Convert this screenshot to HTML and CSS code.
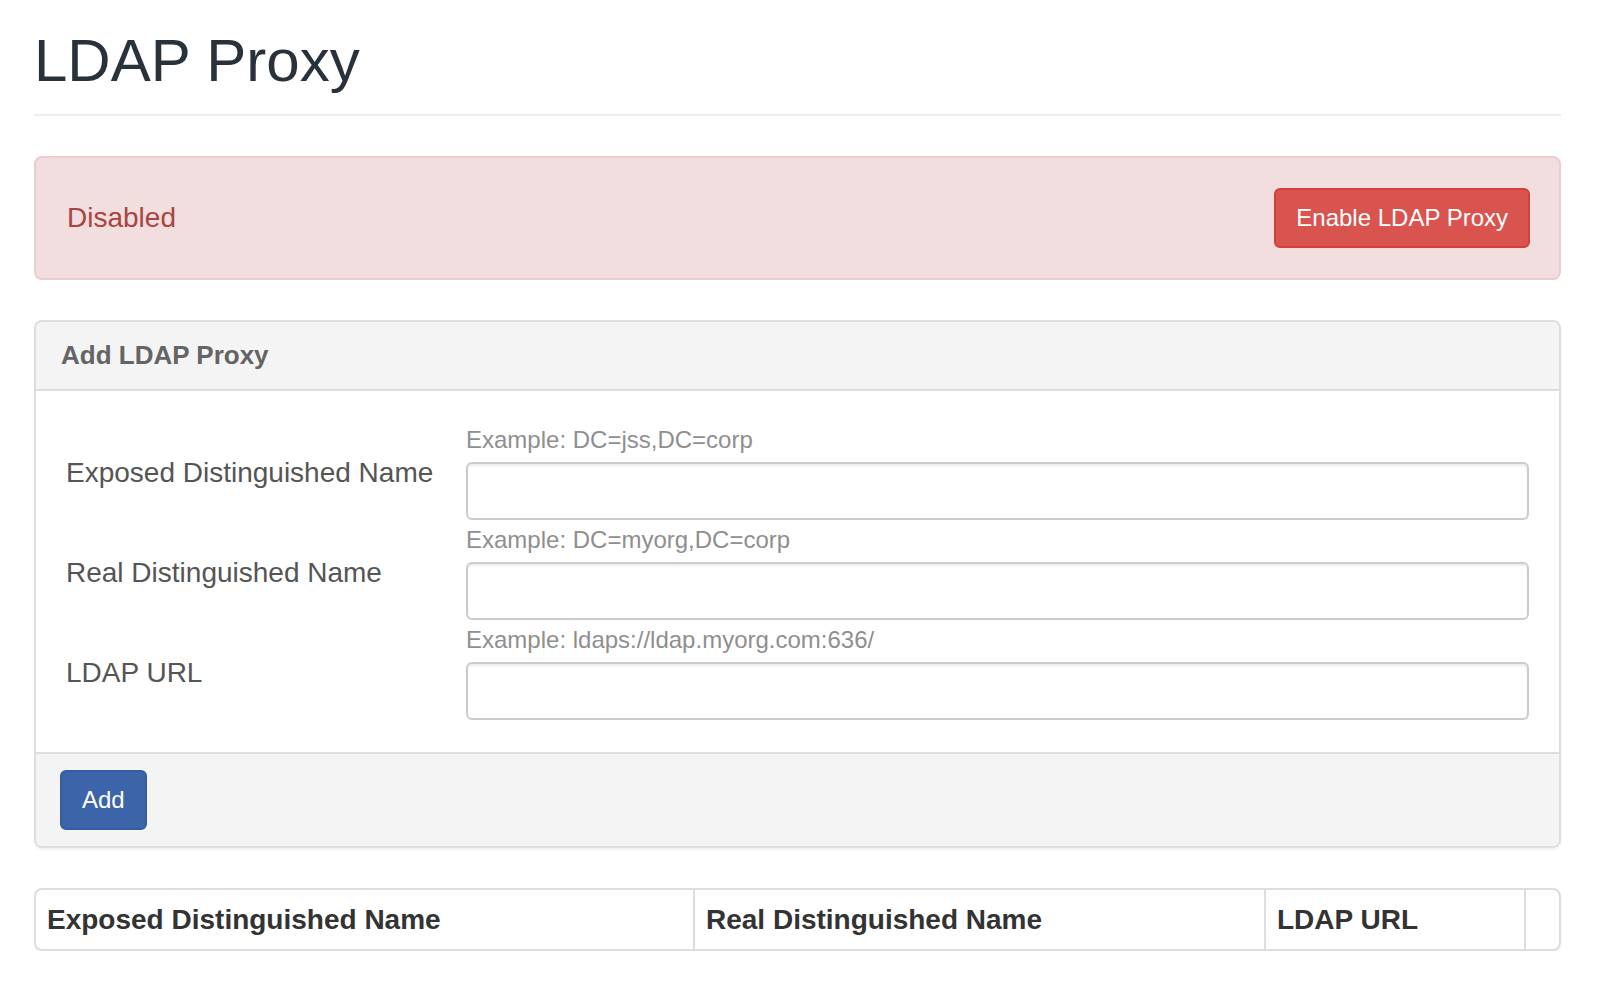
FILE: index.html
```html
<!DOCTYPE html>
<html lang="en">
<head>
<meta charset="utf-8">
<title>LDAP Proxy</title>
<link rel="stylesheet" href="styles.css">
</head>
<body>
<div class="page">
  <div class="page-header">
    <h1 class="title">LDAP Proxy</h1>
  </div>

  <div class="alert">
    <span class="alert-text">Disabled</span>
    <button class="btn btn-danger" type="button">Enable LDAP Proxy</button>
  </div>

  <div class="panel">
    <div class="panel-heading">Add LDAP Proxy</div>
    <div class="panel-body">
      <div class="form-row">
        <label class="form-label">Exposed Distinguished Name</label>
        <div class="form-group">
          <div class="help">Example: DC=jss,DC=corp</div>
          <input class="input" type="text">
        </div>
      </div>
      <div class="form-row">
        <label class="form-label">Real Distinguished Name</label>
        <div class="form-group">
          <div class="help">Example: DC=myorg,DC=corp</div>
          <input class="input" type="text">
        </div>
      </div>
      <div class="form-row">
        <label class="form-label">LDAP URL</label>
        <div class="form-group">
          <div class="help">Example: ldaps://ldap.myorg.com:636/</div>
          <input class="input" type="text">
        </div>
      </div>
    </div>
    <div class="panel-footer">
      <button class="btn btn-primary" type="button">Add</button>
    </div>
  </div>

  <div class="table">
    <div class="th">Exposed Distinguished Name</div>
    <div class="th">Real Distinguished Name</div>
    <div class="th">LDAP URL</div>
    <div class="th"></div>
  </div>
</div>
</body>
</html>
```

FILE: styles.css
```css
* {
  box-sizing: border-box;
}

html, body {
  margin: 0;
  padding: 0;
  background: #ffffff;
}

body {
  font-family: "Liberation Sans", Arial, Helvetica, sans-serif;
  color: #333333;
}

.page {
  padding: 0 39px 0 34px;
}

.page-header {
  padding-top: 28px;
  padding-bottom: 20px;
  border-bottom: 2px solid #eeeeee;
}

.title {
  margin: 0;
  font-size: 60px;
  line-height: 66px;
  font-weight: 400;
  color: #29323a;
}

.alert {
  margin-top: 40px;
  height: 124px;
  display: flex;
  align-items: center;
  justify-content: space-between;
  padding: 0 29px 0 31px;
  background: #f2dede;
  border: 2px solid #ebccd1;
  border-radius: 8px;
}

.alert-text {
  font-size: 28px;
  color: #a94442;
}

.btn {
  font-family: "Liberation Sans", Arial, Helvetica, sans-serif;
  font-size: 24px;
  height: 60px;
  padding: 0 20px;
  border-radius: 6px;
  color: #ffffff;
  cursor: pointer;
}

.btn-danger {
  background: #d9534f;
  border: 2px solid #d43f3a;
}

.btn-primary {
  background: #3c64a9;
  border: 2px solid #365d9f;
}

.panel {
  margin-top: 40px;
  border: 2px solid #dddddd;
  border-radius: 8px;
  box-shadow: 0 2px 2px rgba(0, 0, 0, 0.05);
  overflow: hidden;
}

.panel-heading {
  height: 69px;
  line-height: 67px;
  padding-left: 25px;
  background: #f4f4f4;
  border-bottom: 2px solid #dddddd;
  font-size: 26px;
  font-weight: 700;
  color: #646464;
}

.panel-body {
  padding: 34px 30px 32px 30px;
  background: #ffffff;
}

.form-row {
  display: grid;
  grid-template-columns: 400px 1fr;
  align-items: center;
  margin-bottom: 5px;
}

.form-row:last-child {
  margin-bottom: 0;
}

.form-label {
  font-size: 28px;
  color: #555555;
}

.help {
  font-size: 24px;
  line-height: 30px;
  color: #8f8f8f;
  margin-bottom: 7px;
}

.input {
  display: block;
  width: 100%;
  height: 58px;
  border: 2px solid #cccccc;
  border-radius: 6px;
  box-shadow: inset 0 2px 2px rgba(0, 0, 0, 0.075);
  background: #ffffff;
  font-size: 24px;
  padding: 0 20px;
}

.panel-footer {
  padding: 16px 24px;
  background: #f4f4f4;
  border-top: 2px solid #dddddd;
}

.table {
  margin-top: 40px;
  display: grid;
  grid-template-columns: 657px 571px 260px 1fr;
  border: 2px solid #dddddd;
  border-radius: 8px;
  box-shadow: 0 2px 2px rgba(0, 0, 0, 0.05);
}

.th {
  height: 59px;
  line-height: 59px;
  padding-left: 11px;
  font-size: 28px;
  font-weight: 700;
  color: #333333;
  white-space: nowrap;
}

.th + .th {
  border-left: 2px solid #dddddd;
}
```
